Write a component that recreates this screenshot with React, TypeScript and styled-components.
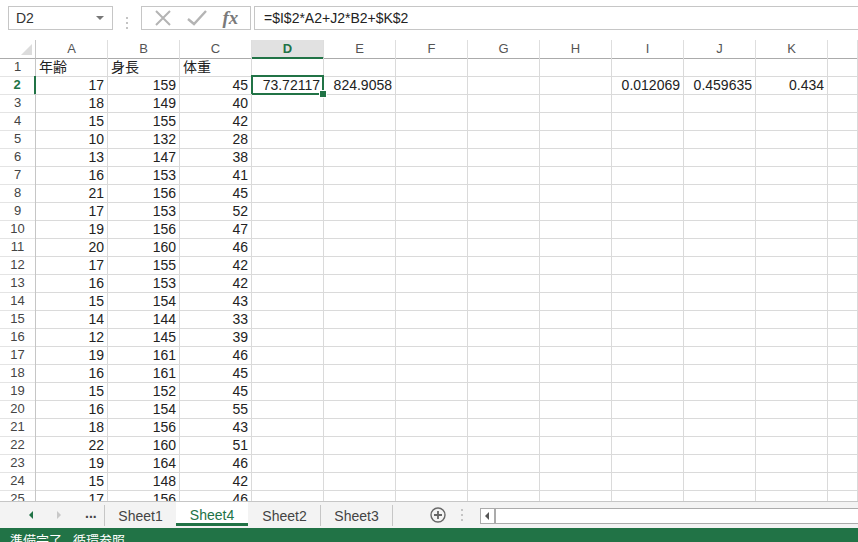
import React from "react";
import styled, { createGlobalStyle, css } from "styled-components";

const GREEN = "#217346";
const GRID = "#dadada";
const CJK = `"Liberation Sans", "Noto Sans CJK JP", sans-serif`;

const GlobalStyle = createGlobalStyle`
  html, body {
    margin: 0;
    padding: 0;
    overflow: hidden;
    background: #fff;
  }
  * { box-sizing: border-box; }
`;

const Window = styled.div`
  width: 858px;
  height: 550px;
  display: flex;
  flex-direction: column;
  font-family: ${CJK};
  color: #222;
`;

/* ---------- formula bar ---------- */
const FormulaBar = styled.div`
  height: 40px;
  display: flex;
  align-items: flex-start;
  padding: 6px 0 0 8px;
`;

const NameBox = styled.div`
  width: 105px;
  height: 24px;
  border: 1px solid #c6c6c6;
  display: flex;
  align-items: center;
  justify-content: space-between;
  padding: 0 8px 0 7px;
  font-size: 14px;
  color: #333;
`;

const Caret = styled.span`
  width: 0;
  height: 0;
  border-left: 4px solid transparent;
  border-right: 4px solid transparent;
  border-top: 4px solid #777;
`;

const Grip = styled.div<{ $w?: number }>`
  width: ${(p) => p.$w ?? 28}px;
  height: 24px;
  display: flex;
  align-items: center;
  justify-content: center;
  align-self: center;
`;

const FxGroup = styled.div`
  width: 110px;
  height: 24px;
  border: 1px solid #c6c6c6;
  display: flex;
  align-items: center;
  justify-content: space-around;
  padding: 0 4px;
`;

const FxLabel = styled.span`
  font-family: "Liberation Serif", serif;
  font-style: italic;
  font-weight: bold;
  font-size: 19px;
  color: #7a7a7a;
  line-height: 1;
  margin-top: -2px;
`;

const FormulaInput = styled.div`
  flex: 1;
  margin-left: 3px;
  height: 24px;
  border: 1px solid #c6c6c6;
  border-right: none;
  display: flex;
  align-items: center;
  padding-left: 9px;
  font-size: 14px;
  color: #222;
`;

/* ---------- grid ---------- */
const Sheet = styled.div`
  height: 461px;
  overflow: hidden;
`;

const Row = styled.div`
  display: grid;
  grid-template-columns: 36px repeat(11, 72px) 1fr;
  height: 18px;
`;

const Corner = styled.div`
  position: relative;
  border-right: 1px solid #c6c6c6;
  border-bottom: 1px solid #ababab;
  &::after {
    content: "";
    position: absolute;
    right: 3px;
    bottom: 3px;
    width: 0;
    height: 0;
    border-left: 11px solid transparent;
    border-bottom: 11px solid #dcdcdc;
  }
`;

const ColHead = styled.div<{ $active?: boolean }>`
  font-size: 13px;
  line-height: 17px;
  text-align: center;
  color: #555;
  border-right: 1px solid #dedede;
  border-bottom: 1px solid #ababab;
  ${(p) =>
    p.$active &&
    css`
      background: #e1e1e1;
      color: ${GREEN};
      font-weight: bold;
      border-bottom: 2px solid ${GREEN};
    `}
`;

const RowHead = styled.div<{ $active?: boolean }>`
  font-size: 13px;
  line-height: 17px;
  text-align: center;
  color: #444;
  border-right: 1px solid #c6c6c6;
  border-bottom: 1px solid #e4e4e4;
  ${(p) =>
    p.$active &&
    css`
      color: ${GREEN};
      font-weight: bold;
      border-right: 2px solid ${GREEN};
    `}
`;

const Cell = styled.div<{ $left?: boolean; $selected?: boolean }>`
  position: relative;
  font-size: 14px;
  line-height: 18px;
  padding: 0 3px;
  text-align: ${(p) => (p.$left ? "left" : "right")};
  white-space: nowrap;
  border-right: 1px solid ${GRID};
  border-bottom: 1px solid ${GRID};
  ${(p) =>
    p.$selected &&
    css`
      &::after {
        content: "";
        position: absolute;
        left: -1px;
        top: -1px;
        right: -1px;
        bottom: -1px;
        border: 2px solid ${GREEN};
      }
      &::before {
        content: "";
        position: absolute;
        right: -4px;
        bottom: -4px;
        width: 6px;
        height: 6px;
        background: ${GREEN};
        border: 1px solid #fff;
        z-index: 1;
      }
    `}
`;

/* ---------- sheet tabs ---------- */
const TabBar = styled.div`
  height: 27px;
  border-top: 1px solid #c6c6c6;
  background: #f3f3f3;
  display: flex;
  align-items: stretch;
`;

const Nav = styled.div`
  width: 104px;
  display: flex;
  align-items: center;
  padding-left: 29px;
`;

const NavArrow = styled.span<{ $dim?: boolean; $dir: "l" | "r" }>`
  width: 0;
  height: 0;
  border-top: 4px solid transparent;
  border-bottom: 4px solid transparent;
  ${(p) =>
    p.$dir === "l"
      ? css`border-right: 4px solid ${p.$dim ? "#c8c8c8" : GREEN};`
      : css`border-left: 4px solid ${p.$dim ? "#c8c8c8" : GREEN};`}
  margin-right: 24px;
`;

const More = styled.span`
  font-size: 14px;
  font-weight: bold;
  color: #444;
  margin-top: -4px;
`;

const Tab = styled.div<{ $active?: boolean }>`
  width: 72px;
  display: flex;
  align-items: center;
  justify-content: center;
  font-size: 14px;
  color: #444;
  border-left: 1px solid #c6c6c6;
  margin: 3px 0 2px;
  ${(p) =>
    p.$active &&
    css`
      margin: 0 0 2px;
      padding-top: 5px;
      background: #fff;
      color: ${GREEN};
      border-left: none;
      border-bottom: 3px solid ${GREEN};
      & + div {
        border-left-color: transparent;
      }
    `}
`;

const TabEnd = styled.div`
  border-left: 1px solid #c6c6c6;
  margin: 3px 0 2px;
  width: 30px;
`;

const AddSheet = styled.div`
  width: 24px;
  display: flex;
  align-items: center;
  justify-content: center;
  margin-left: 4px;
`;

const ScrollBar = styled.div`
  flex: 1;
  margin: 6px 0 4px 6px;
  border: 1px solid #ababab;
  border-right: none;
  background: #fff;
  display: flex;
`;

const ScrollBtn = styled.div`
  width: 15px;
  border-right: 2px solid #ababab;
  display: flex;
  align-items: center;
  justify-content: center;
`;

/* ---------- status bar ---------- */
const StatusBar = styled.div`
  flex: 1;
  background: ${GREEN};
  color: #fff;
  font-size: 13px;
  font-family: "Noto Sans CJK JP", sans-serif;
  display: flex;
  gap: 11px;
  padding: 3px 0 0 10px;
  line-height: 18px;
`;

const VDots = ({ color = "#bbb" }: { color?: string }) => (
  <svg width="4" height="14" viewBox="0 0 4 14">
    <rect x="1" y="1" width="2" height="2" fill={color} />
    <rect x="1" y="6" width="2" height="2" fill={color} />
    <rect x="1" y="11" width="2" height="2" fill={color} />
  </svg>
);

const cols = ["A", "B", "C", "D", "E", "F", "G", "H", "I", "J", "K", ""];

const data: [number, number, number][] = [
  [17, 159, 45],
  [18, 149, 40],
  [15, 155, 42],
  [10, 132, 28],
  [13, 147, 38],
  [16, 153, 41],
  [21, 156, 45],
  [17, 153, 52],
  [19, 156, 47],
  [20, 160, 46],
  [17, 155, 42],
  [16, 153, 42],
  [15, 154, 43],
  [14, 144, 33],
  [12, 145, 39],
  [19, 161, 46],
  [16, 161, 45],
  [15, 152, 45],
  [16, 154, 55],
  [18, 156, 43],
  [22, 160, 51],
  [19, 164, 46],
  [15, 148, 42],
  [17, 156, 46],
];

// extra values on row 2, by column index
const row2Extra: Record<number, string> = {
  3: "73.72117",
  4: "824.9058",
  8: "0.012069",
  9: "0.459635",
  10: "0.434",
};

export default function App() {
  return (
    <Window>
      <GlobalStyle />
      <FormulaBar>
        <NameBox>
          D2
          <Caret />
        </NameBox>
        <Grip>
          <VDots color="#c4c4c4" />
        </Grip>
        <FxGroup>
          <svg width="18" height="16" viewBox="0 0 18 16">
            <path d="M2 1 L16 15 M16 1 L2 15" stroke="#b4b4b4" strokeWidth="2" fill="none" />
          </svg>
          <svg width="20" height="16" viewBox="0 0 20 16">
            <path d="M1 9 L7 14 L19 1" stroke="#b4b4b4" strokeWidth="2.4" fill="none" />
          </svg>
          <FxLabel>fx</FxLabel>
        </FxGroup>
        <FormulaInput>=$I$2*A2+J2*B2+$K$2</FormulaInput>
      </FormulaBar>

      <Sheet>
        <Row>
          <Corner />
          {cols.map((c, i) => (
            <ColHead key={i} $active={c === "D"}>
              {c}
            </ColHead>
          ))}
        </Row>
        <Row>
          <RowHead>1</RowHead>
          <Cell $left>年齢</Cell>
          <Cell $left>身長</Cell>
          <Cell $left>体重</Cell>
          {cols.slice(3).map((_, i) => (
            <Cell key={i} />
          ))}
        </Row>
        {data.map((d, r) => {
          const n = r + 2;
          return (
            <Row key={n}>
              <RowHead $active={n === 2}>{n}</RowHead>
              {cols.map((_, i) => {
                let v: string | number = "";
                if (i < 3) v = d[i];
                else if (n === 2 && row2Extra[i]) v = row2Extra[i];
                return (
                  <Cell key={i} $selected={n === 2 && i === 3}>
                    {v}
                  </Cell>
                );
              })}
            </Row>
          );
        })}
      </Sheet>

      <TabBar>
        <Nav>
          <NavArrow $dir="l" />
          <NavArrow $dir="r" $dim />
          <More>...</More>
        </Nav>
        <Tab>Sheet1</Tab>
        <Tab $active>Sheet4</Tab>
        <Tab>Sheet2</Tab>
        <Tab>Sheet3</Tab>
        <TabEnd />
        <AddSheet>
          <svg width="16" height="16" viewBox="0 0 16 16">
            <circle cx="8" cy="8" r="7" stroke="#666" strokeWidth="1.4" fill="none" />
            <path d="M8 4 V12 M4 8 H12" stroke="#666" strokeWidth="1.8" />
          </svg>
        </AddSheet>
        <Grip $w={24}>
          <VDots color="#c4c4c4" />
        </Grip>
        <ScrollBar>
          <ScrollBtn>
            <svg width="5" height="8" viewBox="0 0 5 8">
              <path d="M4 0 V8 L0 4 Z" fill="#555" />
            </svg>
          </ScrollBtn>
        </ScrollBar>
      </TabBar>

      <StatusBar>
        <span>準備完了</span>
        <span>循環参照</span>
      </StatusBar>
    </Window>
  );
}
